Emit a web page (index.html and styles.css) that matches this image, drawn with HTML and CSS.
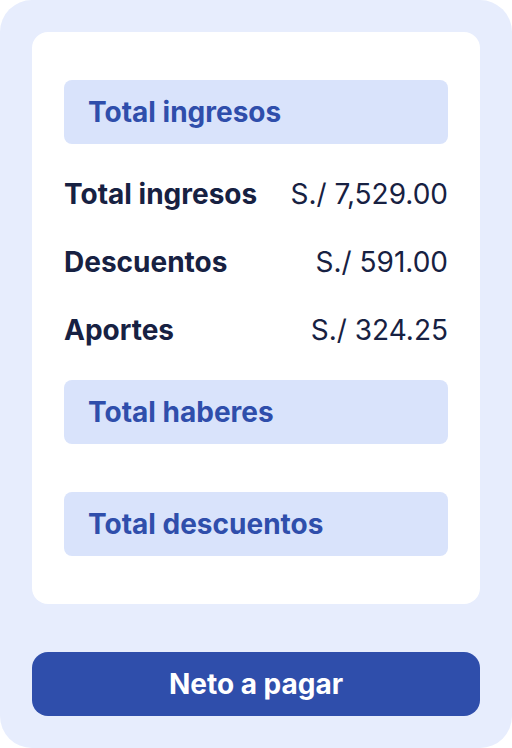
FILE: index.html
```html
<!DOCTYPE html>
<html lang="es">
  <head>
    <meta charset="UTF-8" />
    <meta name="viewport" content="width=device-width, initial-scale=1.0" />
    <title>Resumen de pago</title>
    <link rel="stylesheet" href="styles.css">
  </head>
  <body>
    <div id="panel">
      <div id="summary">
        <h2 class="section">Total ingresos</h2>
        <ul class="rows">
          <li class="row">
            <span class="label">Total ingresos</span>
            <span class="amount">S./ 7,529.00</span>
          </li>
          <li class="row">
            <span class="label">Descuentos</span>
            <span class="amount">S./ 591.00</span>
          </li>
          <li class="row">
            <span class="label">Aportes</span>
            <span class="amount">S./ 324.25</span>
          </li>
        </ul>
        <h2 class="section">Total haberes</h2>
        <h2 class="section">Total descuentos</h2>
      </div>

      <button id="payBtn">Neto a pagar</button>
    </div>
  </body>
</html>
```

FILE: styles.css
```css
body {
  font-family: "Inter", "Liberation Sans", sans-serif;
  margin: 0;
  padding: 0;
  background-color: #fff;
}

#panel {
  width: 512px;
  height: 748px;
  box-sizing: border-box;
  padding: 32px;
  background-color: #e7edfd;
  border-radius: 32px;
  display: flex;
  flex-direction: column;
  gap: 48px;
}

#summary {
  background-color: #fff;
  border-radius: 16px;
  padding: 48px 32px;
  display: flex;
  flex-direction: column;
}

.section {
  margin: 0;
  height: 64px;
  display: flex;
  align-items: center;
  padding: 0 24px;
  background-color: #d9e3fb;
  border-radius: 8px;
  color: #2f4eab;
  font-size: 28px;
  font-weight: 700;
}

.section + .section {
  margin-top: 48px;
}

.rows {
  list-style: none;
  margin: 16px 0;
  padding: 0;
}

.row {
  height: 68px;
  display: flex;
  align-items: center;
  justify-content: space-between;
  font-size: 28px;
  color: #172142;
}

.label {
  font-weight: 700;
}

.amount {
  font-weight: 400;
}

#payBtn {
  height: 64px;
  border: none;
  border-radius: 16px;
  background-color: #2f4eab;
  color: #fff;
  font-family: inherit;
  font-size: 28px;
  font-weight: 700;
  cursor: pointer;
}
```
